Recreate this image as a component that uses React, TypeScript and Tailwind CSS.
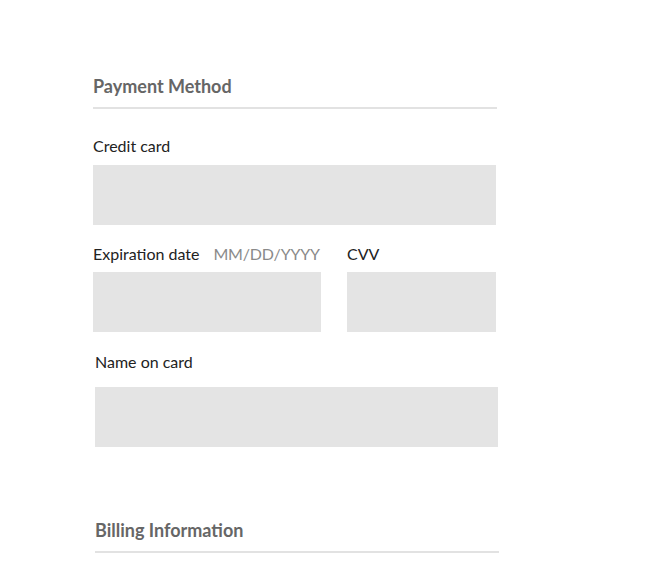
import React from "react";

export default function App() {
  return (
    <div className="min-h-[571px] w-[650px] bg-white" style={{ fontFamily: "Lato, 'Open Sans', sans-serif" }}>
      <div className="pt-[75px] pl-[93px] w-[497px]">
        <h2 className="text-[18px] leading-[22px] font-bold text-[#666666] whitespace-nowrap">Payment Method</h2>
        <div className="mt-[10px] h-[2px] w-[404px] bg-[#e2e2e2]" />
        <label className="mt-[27px] block text-[16px] leading-[20px] text-[#222222] whitespace-nowrap">Credit card</label>
        <div className="mt-[9px] h-[60px] w-[403px] bg-[#e4e4e4]" />
        <div className="mt-[19px] flex gap-[26px]">
          <div className="w-[228px] shrink-0">
            <div className="flex text-[16px] leading-[20px] whitespace-nowrap">
              <span className="text-[#222222]">Expiration date</span>
              <span className="ml-[14px] text-[#8a8a8a] tracking-[-0.2px]">MM/DD/YYYY</span>
            </div>
            <div className="mt-[8px] h-[60px] w-[228px] bg-[#e4e4e4]" />
          </div>
          <div className="w-[149px] shrink-0">
            <div className="text-[16px] leading-[20px] text-[#222222] whitespace-nowrap">CVV</div>
            <div className="mt-[8px] h-[60px] w-[149px] bg-[#e4e4e4]" />
          </div>
        </div>
        <div className="ml-[2px]">
          <label className="mt-[20px] block text-[16px] leading-[20px] text-[#222222] whitespace-nowrap">Name on card</label>
          <div className="mt-[15px] h-[60px] w-[403px] bg-[#e4e4e4]" />
          <h2 className="mt-[72px] text-[18px] leading-[22px] font-bold text-[#666666] whitespace-nowrap">Billing Information</h2>
          <div className="mt-[10px] h-[2px] w-[404px] bg-[#e2e2e2]" />
        </div>
      </div>
    </div>
  );
}
